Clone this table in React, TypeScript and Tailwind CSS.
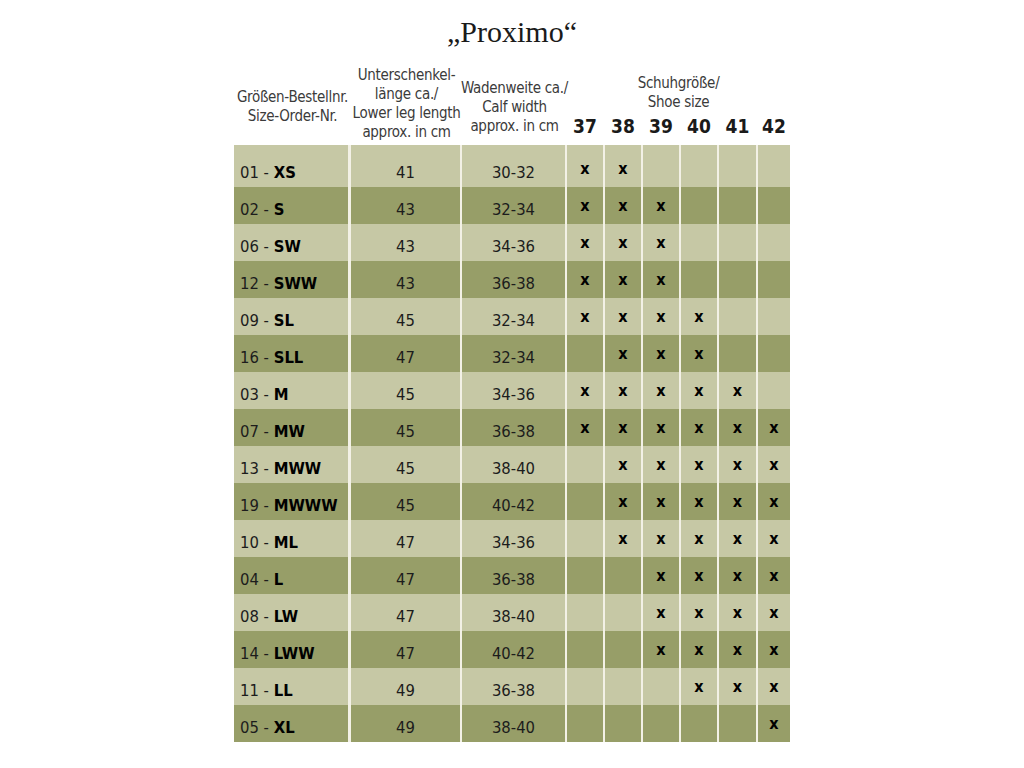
const ROWS: { nr: string; size: string; leg: string; calf: string; shoes: number[] }[] = [
  { nr: "01", size: "XS", leg: "41", calf: "30-32", shoes: [37, 38] },
  { nr: "02", size: "S", leg: "43", calf: "32-34", shoes: [37, 38, 39] },
  { nr: "06", size: "SW", leg: "43", calf: "34-36", shoes: [37, 38, 39] },
  { nr: "12", size: "SWW", leg: "43", calf: "36-38", shoes: [37, 38, 39] },
  { nr: "09", size: "SL", leg: "45", calf: "32-34", shoes: [37, 38, 39, 40] },
  { nr: "16", size: "SLL", leg: "47", calf: "32-34", shoes: [38, 39, 40] },
  { nr: "03", size: "M", leg: "45", calf: "34-36", shoes: [37, 38, 39, 40, 41] },
  { nr: "07", size: "MW", leg: "45", calf: "36-38", shoes: [37, 38, 39, 40, 41, 42] },
  { nr: "13", size: "MWW", leg: "45", calf: "38-40", shoes: [38, 39, 40, 41, 42] },
  { nr: "19", size: "MWWW", leg: "45", calf: "40-42", shoes: [38, 39, 40, 41, 42] },
  { nr: "10", size: "ML", leg: "47", calf: "34-36", shoes: [38, 39, 40, 41, 42] },
  { nr: "04", size: "L", leg: "47", calf: "36-38", shoes: [39, 40, 41, 42] },
  { nr: "08", size: "LW", leg: "47", calf: "38-40", shoes: [39, 40, 41, 42] },
  { nr: "14", size: "LWW", leg: "47", calf: "40-42", shoes: [39, 40, 41, 42] },
  { nr: "11", size: "LL", leg: "49", calf: "36-38", shoes: [40, 41, 42] },
  { nr: "05", size: "XL", leg: "49", calf: "38-40", shoes: [42] },
];

const SHOE_SIZES = [37, 38, 39, 40, 41, 42];
// last shoe column is narrower than the others
const shoeWidth = (s: number) => (s === 42 ? "w-[32px]" : s === 41 ? "w-[37px]" : "w-[36px]");

const FONT = "font-['DejaVu_Sans_Condensed','Liberation_Sans',sans-serif]";

export default function App() {
  return (
    <div className={`min-h-screen bg-white ${FONT}`}>
      <h1 className="pt-[14px] text-center font-['Liberation_Serif',serif] text-[30px] leading-[36px] text-[#1a1a1a]">
        „Proximo“
      </h1>

      <div className="mx-auto mt-[12px] w-[556px]">
        {/* header */}
        <div className="flex h-[83px] whitespace-nowrap text-[15px] leading-[19px] tracking-[-0.3px] text-[#3b3b3b]">
          <div className="flex w-[117px] items-center justify-center pt-[6px] text-center">
            Größen-Bestellnr.
            <br />
            Size-Order-Nr.
          </div>
          <div className="flex w-[111px] items-center justify-center pt-[1px] text-center">
            Unterschenkel-
            <br />
            länge ca./
            <br />
            Lower leg length
            <br />
            approx. in cm
          </div>
          <div className="flex w-[105px] items-center justify-center pt-[8px] text-center">
            Wadenweite ca./
            <br />
            Calf width
            <br />
            approx. in cm
          </div>
          <div className="flex flex-1 flex-col justify-end pb-[8px]">
            <div className="text-center">
              Schuhgröße/
              <br />
              Shoe size
            </div>
            <div className="mt-[3px] flex gap-[2px] text-[19px] font-bold leading-[22px] tracking-normal text-[#1a1a1a]">
              {SHOE_SIZES.map((s) => (
                <div key={s} className={`${shoeWidth(s)} text-center`}>
                  {s}
                </div>
              ))}
            </div>
          </div>
        </div>

        {/* body */}
        <div className="flex flex-col text-[16.5px] text-[#1c1c1c]">
          {ROWS.map((r, i) => {
            const bg = i % 2 === 0 ? "bg-[#c6c8a5]" : "bg-[#979e68]";
            const h = i === 0 ? "h-[42px] pt-[18px]" : "h-[37px] pt-[13px]";
            const hx = i === 0 ? "h-[42px] pt-[15px]" : "h-[37px] pt-[10px]";
            return (
              <div key={r.nr} className="flex bg-[#f3f1e6]">
                <div className={`${bg} ${h} w-[114px] pl-[6px] leading-[20px]`}>
                  {r.nr} - <span className="font-bold text-black">{r.size}</span>
                </div>
                <div className={`${bg} ${h} ml-[3px] w-[109px] text-center leading-[20px]`}>{r.leg}</div>
                <div className={`${bg} ${h} ml-[2px] w-[103px] text-center leading-[20px]`}>{r.calf}</div>
                {SHOE_SIZES.map((s) => (
                  <div
                    key={s}
                    className={`${bg} ${hx} ${shoeWidth(s)} ml-[2px] text-center text-[16px] font-bold leading-[18px] text-black`}
                  >
                    {r.shoes.includes(s) ? "x" : ""}
                  </div>
                ))}
              </div>
            );
          })}
        </div>
      </div>
    </div>
  );
}
